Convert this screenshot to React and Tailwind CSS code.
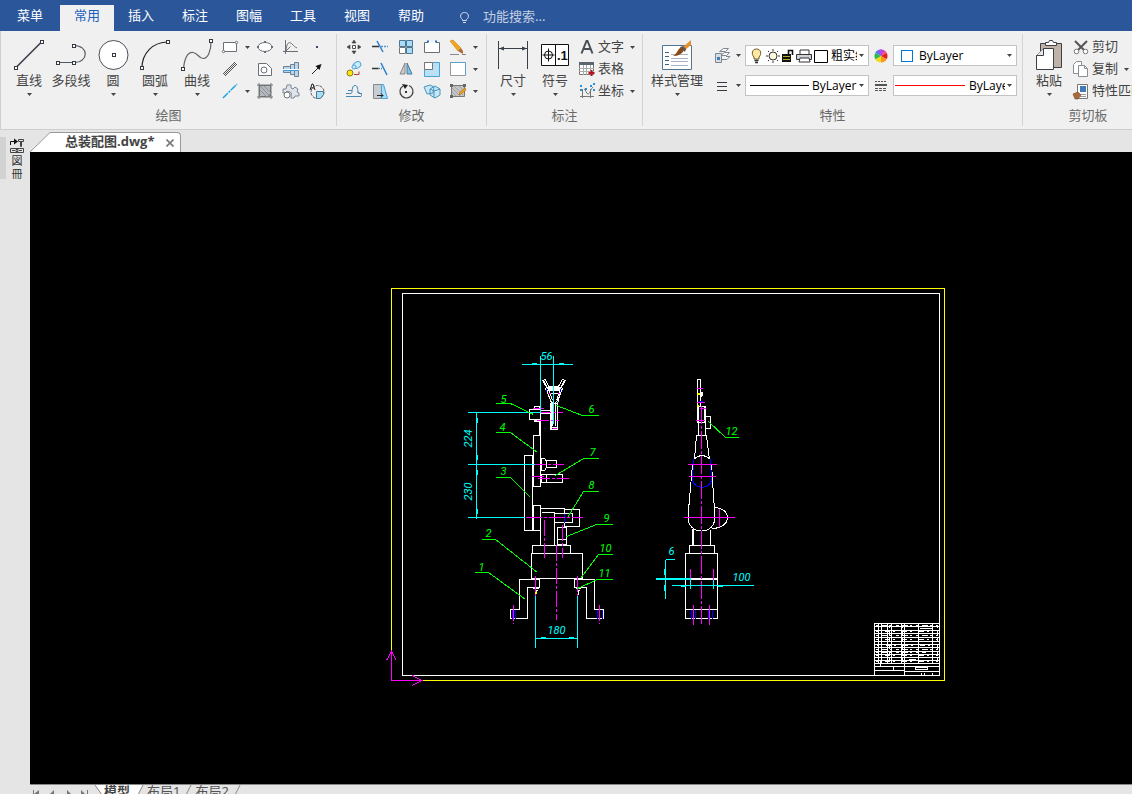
import { useState } from 'react';

const MENU = ['常用', '插入', '标注', '图幅', '工具', '视图', '帮助'];

const Svg = ({ w = 20, h = 20, children, ...rest }) => (
  <svg width={w} height={h} viewBox={`0 0 ${w} ${h}`} fill="none" stroke="#6b7078" className="block shrink-0" aria-hidden="true" {...rest}>
    {children}
  </svg>
);

const Arrow = () => (
  <svg width="5" height="3" viewBox="0 0 5 3" className="block shrink-0" aria-hidden="true">
    <path d="M0 0h5L2.5 3z" fill="#444" />
  </svg>
);

const Node = ({ x, y }) => <rect x={x - 1.5} y={y - 1.5} width="3" height="3" fill="#fff" stroke="#333a42" />;

/* ---- large icons ---- */

const LineIcon = () => (
  <Svg w={32} h={32}>
    <path d="M3 28.5L29 2.5" stroke="#3d3d4a" strokeWidth="1.6" />
    <Node x={3} y={29} />
    <Node x={29} y={3} />
  </Svg>
);

const PolylineIcon = () => (
  <Svg w={32} h={32}>
    <path d="M3 23.5H19C34 23.5 34 6.500 19 6.500" stroke="#555a62" strokeWidth="1.2" />
    <Node x={3} y={24} />
    <Node x={19} y={24} />
    <Node x={19} y={7} />
  </Svg>
);

const CircleIcon = () => (
  <Svg w={32} h={32}>
    <circle cx="16.500" cy="16" r="14.500" fill="#fff" stroke="#4a5058" />
    <Node x={17} y={16} />
  </Svg>
);

const ArcIcon = () => (
  <Svg w={32} h={32}>
    <path d="M3 29C3 14 14 3 29 3" stroke="#222" strokeWidth="1.2" />
    <Node x={3} y={29} />
    <Node x={29} y={3} />
  </Svg>
);

const CurveIcon = () => (
  <Svg w={32} h={32}>
    <path d="M2.500 29C4 17 7 13 12 13.500S18 20 22.500 19.500S30 12 30 3" stroke="#666" strokeWidth="1.2" />
    <Node x={2} y={30} />
    <Node x={30} y={2} />
  </Svg>
);

const DimensionIcon = () => (
  <Svg w={32} h={32} stroke="#3a3f47">
    <path d="M1.500 2v28M30.500 2v28M2 9.500h28" />
    <path d="M2 9.500l5-2v4zM30 9.500l-5-2v4z" fill="#3a3f47" stroke="none" />
  </Svg>
);

const SymbolIcon = () => (
  <Svg w={32} h={32} stroke="#111">
    <path d="M2.500 5.500h27v21h-27zM16.500 5.500v21" fill="#fff" />
    <circle cx="9.500" cy="16" r="4" />
    <path d="M3.500 16h12M9.500 9.500v13" />
    <text x="18" y="21" fontSize="13" fontWeight="700" fontFamily="Liberation Sans, sans-serif" fill="#111" stroke="none">.1</text>
  </Svg>
);

const StyleIcon = () => (
  <Svg w={32} h={32}>
    <path d="M1.500 6.500h29v24h-29z" fill="#fff" stroke="#4f7590" />
    <path d="M4 13.500h4M4 17.500h4M4 21.500h4M4 25.500h4" stroke="#3d5f80" />
    <path d="M10 15.500h17M10 19.500h17M10 22.500h17M10 26.500h17" stroke="#a9b4c4" />
    <path d="M22 8l8-7v5l-6 5z" fill="#e8902c" stroke="none" />
    <path d="M19 8l3-1 3 3-1 3z" fill="#555" stroke="none" />
    <path d="M20 8l3 3c-2 4-6 6-11 6 4-2 4-6 8-9z" fill="#8a4a16" stroke="none" />
  </Svg>
);

const PasteIcon = () => (
  <Svg w={32} h={32} stroke="#3c4048">
    <path d="M7.500 4.500h21v24h-21z" fill="#c0b2a6" />
    <path d="M12.500 6.500v-3h3l1-2h3l1 2h3v3z" fill="#fff" />
    <path d="M10.500 9.500h10v21h-17v-14z" fill="#fff" />
    <path d="M10.500 9.500v7h-7" fill="#e8e8e8" />
  </Svg>
);

/* ---- small icons ---- */

const drawIcons = [
  { label: '矩形', arrow: true, icon: <Svg><path d="M3.500 5.500h13v9h-13z" fill="#fff" /><circle cx="3.500" cy="14.500" r="1.200" fill="#fff" /><circle cx="16.500" cy="5.500" r="1.200" fill="#fff" /></Svg> },
  { label: '椭圆', icon: <Svg><ellipse cx="10" cy="10" rx="7" ry="4.500" fill="#fff" /><path d="M9 5h2M9 15h2M3 9v2M17 9v2" strokeWidth="2" /></Svg> },
  { label: '公式曲线', icon: <Svg><path d="M4.500 3v14M2 14.500h15M5 13C6 4 9 5 11 7S14 10 16 11M4.500 14.500l5-5" /></Svg> },
  { label: '点', icon: <Svg><path d="M9 9h2v2h-2z" fill="#446" stroke="none" /></Svg> },
  { label: '平行线', icon: <Svg><path d="M3 15L15 3M5 17L17 5M4 16L16 4" stroke="#555" /></Svg> },
  { label: '孔', icon: <Svg><path d="M3.500 4.500h8l5 5v7h-13z" fill="#fff" /><circle cx="9" cy="11" r="3" fill="#fff" /></Svg> },
  { label: '轴', icon: <Svg stroke="#6b8296"><path d="M2.500 7.500h7v6h-7zM9.500 5.500h4v10h-4zM13.500 3.500h4v14h-4z" fill="#bcd6ea" /><path d="M2 10.500h16" stroke="#fff" /><path d="M2 11.500h16" stroke="#3c9be0" /></Svg> },
  { label: '箭头', icon: <Svg><path d="M5 15l6-6" stroke="#222" /><path d="M14.500 5l-2 6-4-4z" fill="#111" stroke="none" /></Svg> },
  { label: '中心线', arrow: true, icon: <Svg><path d="M3 17L17 3" stroke="#2aa7e0" strokeWidth="1.600" strokeDasharray="7 1 2 1" /></Svg> },
  { label: '剖面线', icon: <Svg><path d="M4.500 4.500h11v11h-11z" fill="#b5b9bd" /><path d="M4 2v16M16 2v16M2 4h16M2 16h16" stroke="#777" /><path d="M5 9l7 7M5 5l11 11M9 5l7 7M17 11l-6 6" stroke="#8d9297" /></Svg> },
  { label: '齿轮', icon: <Svg><path d="M6 4h4v3l2 1 2-2 3 2-1 3 2 1v3h-4l-1 2h-3v-2c2-5-4-6-6-3H2V8h3z" fill="#dfe4ea" stroke="#7c8794" /><circle cx="6" cy="14" r="3" fill="#fff" /></Svg> },
  { label: '局部放大', icon: <Svg><circle cx="10.500" cy="11" r="6.500" stroke="#556" strokeDasharray="3 1" /><path d="M9.500 10.500h7v3l-3 4h-4z" fill="#a9dcf6" stroke="#4a7894" /><path d="M3 9l2-6h1l2 6M4 7h3" stroke="#222" /></Svg> },
];

const editIcons = [
  { label: '平移', icon: <Svg><path d="M8.500 8.500h3v3h-3z" fill="#fff" stroke="#555" /><path d="M10 3l2 3H8zM10 17l2-3H8zM3 10l3-2v4zM17 10l-3-2v4z" fill="#444" stroke="#444" strokeWidth=".6" /></Svg> },
  { label: '裁剪', icon: <Svg><path d="M2 9.500h7" stroke="#333" strokeWidth="1.500" /><path d="M11 9.500h7" stroke="#5a94c8" strokeWidth="1.500" strokeDasharray="2 1" /><path d="M7 4l6 11" stroke="#2a7fd0" strokeWidth="1.500" /></Svg> },
  { label: '阵列', icon: <Svg stroke="#4a7894"><path d="M3.500 3.500h6v6h-6zM10.500 3.500h6v6h-6zM10.500 10.500h6v6h-6z" fill="#a9dcf6" /><path d="M3.500 10.500h6v6h-6z" fill="#fff" stroke="#777" /></Svg> },
  { label: '打断', icon: <Svg><path d="M6 5.500H2.500v10h15v-10H14" fill="#fff" /><path d="M5 4.500h2M13 4.500h2" stroke="#1b6fd0" strokeWidth="2" /></Svg> },
  { label: '删除', arrow: true, icon: <Svg><path d="M2 4l3-1 8 8-3 3z" fill="#f2a51d" stroke="#c78316" strokeWidth=".6" /><path d="M10 14l3-3 2 3v3z" fill="#b06a3a" stroke="none" /><path d="M2 17.500h9M14 17.500h4" stroke="#888" /></Svg> },
  { label: '复制', icon: <Svg><ellipse cx="13" cy="6" rx="4" ry="3" fill="#cfeafa" stroke="#4aa3d8" transform="rotate(-30 13 6)" /><circle cx="10" cy="8" r="2" fill="#cfeafa" stroke="#4aa3d8" /><circle cx="6" cy="14" r="3" fill="#ffe600" stroke="#8a7a20" /><path d="M10 15.500h5v-3" stroke="#b33" /></Svg> },
  { label: '延伸', icon: <Svg><path d="M2 9.500h6" stroke="#333" strokeWidth="1.500" /><path d="M8 9.500h4" stroke="#48a" strokeWidth="1.500" strokeDasharray="2 1" /><path d="M11 4l6 12" stroke="#2a7fd0" strokeWidth="1.500" /></Svg> },
  { label: '镜像', icon: <Svg><path d="M9 4v11H4z" fill="#ccc" stroke="#888" /><path d="M11 4v11h5z" fill="#7cc4ee" stroke="#4a7894" /></Svg> },
  { label: '缩放', icon: <Svg><path d="M2.500 3.500h15v14h-15z" fill="#b9e0f5" stroke="#4aa3d8" /><path d="M2.500 3.500h8v7h-8z" fill="#fff" stroke="#777" /></Svg> },
  { label: '拉伸', arrow: true, icon: <Svg><path d="M2.500 3.500h15v13h-15z" fill="#fff" stroke="#999" /><path d="M2.500 3.500h15v13" stroke="#4aa3d8" strokeDasharray="3 1" /></Svg> },
  { label: '等距线', icon: <Svg><path d="M2 12.500h5c2 0 0-8 4-8s2 8 4 8h3M2 15.500h15c2-2-2-5-4-4M4 9.500h4" stroke="#4b86b0" /></Svg> },
  { label: '倒角', icon: <Svg><path d="M3.500 3.500h8v14h-8z" fill="#c9cdd2" stroke="#888" /><path d="M11.500 3.500h2l4 14h-6z" fill="#a9dcf6" stroke="#4aa3d8" /><path d="M7 14.500h6m-2-2l2 2-2 2" stroke="#222" /></Svg> },
  { label: '旋转', icon: <Svg stroke="#444"><path d="M7 5a6.500 6.500 0 1 0 6-.5" strokeWidth="1.200" /><path d="M6 3l6 1-3 4z" fill="#222" stroke="none" /><path d="M9 10h2v2h-2z" fill="#333" stroke="none" /></Svg> },
  { label: '块', icon: <Svg stroke="#4a94bc"><path d="M2 6l6-2 4 2-1 6-6 1zM8 8l5-3 5 3v6l-5 3-5-3z" fill="#c6e7f7" /><path d="M8 8l4 2 6-2M12 10v7" /></Svg> },
  { label: '编辑剖面', arrow: true, icon: <Svg stroke="#777"><path d="M3.500 4.500h13v11h-13z" fill="#c4c4c4" /><path d="M4 7l8 8M6 5l9 9M4 11l4 4M11 5l5 5" stroke="#a4a4a4" /><path d="M2 3h3v3H2zM15 3h3v3h-3zM2 14h3v3H2z" fill="#666" stroke="none" /><path d="M11 14l1-3 5-4 1 2-5 4z" fill="#f2a51d" stroke="#a66a10" strokeWidth=".6" /></Svg> },
];

const TextIcon = () => (
  <Svg stroke="#4a4e55"><path d="M4.500 16.500L9.500 4h1l5 12.500M6.500 12h7" strokeWidth="2" /></Svg>
);

const TableIcon = () => (
  <Svg>
    <path d="M2.500 3.500h14v12h-14z" fill="#fff" stroke="#777" />
    <path d="M2 3h15v3H2z" fill="#5c6470" stroke="none" />
    <path d="M2 9.500h15M2 12.500h15M6.500 6v10M9.500 6v10M13.500 6v10" stroke="#aaa" />
    <path d="M14.500 11v6M11.500 14h6" stroke="#b3121d" strokeWidth="2" />
  </Svg>
);

const CoordIcon = () => (
  <Svg>
    <path d="M5.500 8v9M3 15.500h14M7 8c2 0 2 5 4 5s2-4 5-7M13.500 8v9" stroke="#777" />
    <path d="M3 5h2M3 9h2M8 8h2M13 5h2M16 3h2M16 9h2" stroke="#2a8fd8" strokeWidth="2" />
  </Svg>
);

const ScissorsIcon = () => (
  <Svg>
    <path d="M4 4l9 9M16 4l-9 9" stroke="#555" strokeWidth="2" />
    <circle cx="5.500" cy="14.500" r="2.300" fill="#fff" stroke="#777" />
    <circle cx="14.500" cy="14.500" r="2.300" fill="#fff" stroke="#777" />
  </Svg>
);

const CopyIcon = () => (
  <Svg>
    <path d="M2.500 5.500l3-3h5v12h-8z" fill="#fff" stroke="#8a8f96" />
    <path d="M7.500 6.500h6l3 3v8h-9z" fill="#fff" stroke="#8a8f96" />
    <path d="M13.500 6.500v3h3" stroke="#8a8f96" />
  </Svg>
);

const MatchIcon = () => (
  <Svg>
    <path d="M6.500 3.500h10v14h-10z" fill="#fff" stroke="#777" />
    <path d="M9 5h6v6H9z" fill="#3f7cb8" stroke="none" />
    <path d="M9 13.500h6M9 15.500h6" stroke="#999" />
    <path d="M2 13l5-2 3 3-3 4H4z" fill="#a86a3a" stroke="#7a4720" strokeWidth=".6" />
  </Svg>
);

const LayerIcon = () => (
  <Svg stroke="#808890">
    <path d="M7.500 5.500l4-3h5l-3 3zM8.500 9.500l4-3h5l-3 3zM10 13.500h5l3-3h-4" fill="#f4f6f8" />
    <path d="M3.500 7.500h6v9h-6z" fill="#d4dce4" />
    <path d="M5 11h3v3H5z" fill="#3f7cb8" stroke="none" />
  </Svg>
);

const WeightIcon = () => (
  <Svg stroke="#333a42"><path d="M5 6.500h10M5 10.500h10M5 14.500h10" /></Svg>
);

const ColorWheel = () => (
  <Svg w={16} h={16} stroke="none">
    <path d="M8 8V1.500A6.500 6.500 0 0 1 13.600 4.750z" fill="#f0508c" />
    <path d="M8 8l5.600-3.250a6.500 6.500 0 0 1 0 6.500z" fill="#e8201c" />
    <path d="M8 8l5.600 3.250A6.500 6.500 0 0 1 8 14.500z" fill="#f59a1c" />
    <path d="M8 8v6.500a6.500 6.500 0 0 1-5.600-3.250z" fill="#f2dc1a" />
    <path d="M8 8l-5.600 3.250a6.500 6.500 0 0 1 0-6.500z" fill="#30b848" />
    <path d="M8 8L2.400 4.750A6.500 6.500 0 0 1 8 1.500z" fill="#4f7df2" />
    <path d="M8 8L5 2.200a6.500 6.500 0 0 1 6 0z" fill="#b04af0" />
  </Svg>
);

const LineTypeIcon = () => (
  <Svg w={16} h={16} stroke="#555">
    <path d="M2 3.500h12" strokeDasharray="2 1" />
    <path d="M2 7h12" strokeWidth="2" />
    <path d="M2 10.500h12M2 12.500h12" strokeDasharray="3 1" />
  </Svg>
);

const LayerState = () => (
  <svg width="81" height="18" viewBox="0 0 81 18" fill="none" className="block shrink-0" aria-hidden="true">
    <path d="M4 10C1 7 2 2 6.500 2S12 7 9 10v2H4z" fill="#ffe9a0" stroke="#6b5a2a" />
    <path d="M4.500 13.500h4M5 15.500h3" stroke="#333" strokeWidth="1.500" />
    <circle cx="23" cy="9" r="4" fill="#fff8e0" stroke="#333" />
    <path d="M23 2v2M23 14v2M16 9h2M28 9h2M18 4l1 1M28 4l-1 1M18 14l1-1M28 14l-1-1" stroke="#333" />
    <path d="M32 7h9v8h-9z" fill="#111" />
    <path d="M33 9.500h7M33 12.500h7" stroke="#b8b020" />
    <path d="M38.500 7V3.500h4V8" stroke="#111" strokeWidth="1.600" />
    <path d="M50 7V3h9v4" fill="#fff" stroke="#333" />
    <path d="M46.500 7.500h15v5h-15z" fill="#cdd2d8" stroke="#333" />
    <path d="M50 11h9l1 4H49z" fill="#fff" stroke="#333" />
    <path d="M64.500 3.500h13v12h-13z" fill="#fff" stroke="#000" />
  </svg>
);

/* ---- ribbon parts ---- */

const Group = ({ title, children }) => (
  <section className="my-[3px] flex shrink-0 flex-col border-r border-[#d4d4d4] px-[5px] pt-[2px]">
    <div className="flex h-[70px]">{children}</div>
    <h2 className="text-center text-[13px] leading-[18px] text-[#6a6a6a]">{title}</h2>
  </section>
);

const BigButton = ({ icon, label, arrow = true }) => (
  <button className="flex min-w-[42px] flex-col items-center px-[1px] pt-[3px] text-[13px] leading-[18px] whitespace-nowrap">
    {icon}
    <span>{label}</span>
    {arrow && <span className="pt-1"><Arrow /></span>}
  </button>
);

const SmallButton = ({ icon, label, arrow }) => (
  <button aria-label={label} className="flex h-[22px] items-center">
    <span className="flex w-6 justify-center">{icon}</span>
    {arrow && <span className="pl-[3px]"><Arrow /></span>}
  </button>
);

const RowButton = ({ icon, label, arrow }) => (
  <button className="flex h-[22px] items-center text-[13px] leading-[18px] whitespace-nowrap">
    <span className="flex w-[22px] justify-center">{icon}</span>
    <span className="pb-[2px]">{label}</span>
    {arrow && <span className="pl-[6px]"><Arrow /></span>}
  </button>
);

const Combo = ({ label, options, children }) => (
  <label className="flex h-[21px] w-[124px] items-center border border-[#c3c3c3] bg-white px-1 font-['Open_Sans','Noto_Sans_CJK_SC',sans-serif] text-xs text-black">
    {children}
    <select aria-label={label} className="mr-[2px] min-w-0 flex-1 appearance-none overflow-hidden bg-transparent outline-none">
      {options.map(o => <option key={o}>{o}</option>)}
    </select>
    <Arrow />
  </label>
);

const Ribbon = () => (
  <div className="flex h-[99px] shrink-0 overflow-hidden border-b border-l border-[#cfcfcf] bg-[#f0f0f0] text-[#444]">
    <Group title="绘图">
      <div className="flex pl-[2px]">
        <BigButton icon={<LineIcon />} label="直线" />
        <BigButton icon={<PolylineIcon />} label="多段线" arrow={false} />
        <BigButton icon={<CircleIcon />} label="圆" />
        <BigButton icon={<ArcIcon />} label="圆弧" />
        <BigButton icon={<CurveIcon />} label="曲线" />
      </div>
      <div className="grid grid-cols-[35px_26px_26px_26px] content-start">
        {drawIcons.map(i => <SmallButton key={i.label} {...i} />)}
      </div>
    </Group>
    <Group title="修改">
      <div className="grid grid-cols-[26px_26px_26px_26px_35px] content-start">
        {editIcons.map(i => <SmallButton key={i.label} {...i} />)}
      </div>
    </Group>
    <Group title="标注">
      <BigButton icon={<DimensionIcon />} label="尺寸" />
      <BigButton icon={<SymbolIcon />} label="符号" />
      <div className="pr-[2px]">
        <RowButton icon={<TextIcon />} label="文字" arrow />
        <RowButton icon={<TableIcon />} label="表格" />
        <RowButton icon={<CoordIcon />} label="坐标" arrow />
      </div>
    </Group>
    <Group title="特性">
      <div className="flex w-[58px] justify-center">
        <BigButton icon={<StyleIcon />} label="样式管理" />
      </div>
      <div className="flex flex-col gap-[9px] pt-[9px] pl-[6px]">
        <div className="flex h-[21px] items-center">
          <button aria-label="图层" className="flex w-[33px] items-center justify-between pr-1"><LayerIcon /><Arrow /></button>
          <Combo label="当前图层" options={['粗实线层', '细实线层', '中心线层']}><LayerState /></Combo>
          <button aria-label="颜色" className="flex w-6 justify-center"><ColorWheel /></button>
          <Combo label="当前颜色" options={['ByLayer', 'ByBlock']}>
            <span className="mx-[3px] mr-[6px] h-3 w-3 shrink-0 border border-[#0078d7]" />
          </Combo>
        </div>
        <div className="flex h-[21px] items-center">
          <button aria-label="线宽" className="flex w-[33px] items-center justify-between pr-1"><WeightIcon /><Arrow /></button>
          <Combo label="当前线宽" options={['ByLayer', 'ByBlock']}>
            <span className="mr-[3px] h-px w-[59px] shrink-0 bg-black" />
          </Combo>
          <button aria-label="线型" className="flex w-6 justify-center"><LineTypeIcon /></button>
          <Combo label="当前线型" options={['ByLayer', 'ByBlock']}>
            <span className="mr-1 -ml-[3px] h-px w-[70px] shrink-0 bg-[#ff0000]" />
          </Combo>
        </div>
      </div>
    </Group>
    <Group title="剪切板">
      <BigButton icon={<PasteIcon />} label="粘贴" />
      <div className="pr-1">
        <RowButton icon={<ScissorsIcon />} label="剪切" />
        <RowButton icon={<CopyIcon />} label="复制" arrow />
        <RowButton icon={<MatchIcon />} label="特性匹配" />
      </div>
    </Group>
  </div>
);

/* ---- drawing ---- */

const LEADERS = [
  ['1', 481, 570, '474,572 488,572 525,599'],
  ['2', 488, 536, '481,539 495,539 537,572'],
  ['3', 503, 474, '495,477 510,477 530,497'],
  ['4', 502, 430, '495,432 510,432 537,452'],
  ['5', 503, 402, '495,403 510,403 533,414'],
  ['6', 591, 412, '598,415 582,415 556,405'],
  ['7', 592, 455, '598,458 583,458 555,475'],
  ['8', 591, 488, '598,491 583,491 567,517'],
  ['9', 606, 521, '612,524 596,524 566,536'],
  ['10', 605, 551, '612,554 598,554 580,578'],
  ['11', 604, 576, '612,579 597,579 577,588'],
  ['12', 731, 434, '738,437 725,437 708,421'],
];

const TABLE_ROWS = [626, 630, 633, 637, 641, 644, 647, 651, 654, 657, 660, 663];
const TABLE_COLS = [878, 881, 887, 891, 901, 904, 918, 932];

const Drawing = () => (
  <svg width="1102" height="632" viewBox="30 152 1102 632" fill="none" shapeRendering="crispEdges" className="block shrink-0" role="img" aria-label="总装配图">
    <g transform="translate(.5 .5)">
      <path d="M391 288H944V680H391z" stroke="#ff0" />
      <path d="M402 293H939V675H402z" stroke="#fff" />

      <g stroke="#fff">
        {/* fork and shaft */}
        <path d="M542 380l5 8h13l5-8M543 380l5 9h11l5-9M545 379l3 7h10l4-7M542 380l3-1M562 379l3 1M546 389l5 14M545 388l6 14M561 389l-4 14M562 388l-6 14M546 390h15M548 393h11M549 391l3 9M559 391l-3 9M547 387h13" />
        <path d="M550 403h7v26h-7zM551 403v26M552 401v24M555 401v24M551 427h6" />
        <path d="M529 409h11v10h-11zM534 406h5v2h-5zM534 420h5v1h-5zM540 406v29M539 420v14M540 410h10M540 413h10" />
        {/* column */}
        <path d="M533 435h7v51h-7zM524 455h8v75h-8zM541 458h3l2 3v6l-2 3h-3zM546 460h10v7h-10zM541 474h21v8h-21zM546 474v8" />
        <path d="M533 505h7v25h-7zM540 508h24v4M540 508v37M541 512h13v33M554 513h18v9h-18M564 509h15v17h-15zM557 527h9v17h-9zM557 539h9" />
        <path d="M532 545h38v8h-38zM531 553h51v25h-51z" />
        <path d="M519 579H539V587H527V618H510V609H519zM574 579H594V609H603V618H586V587H574z" />
        <path d="M532 588h6M534 590h3M535 590v4M575 588h5M576 590h3M578 590v4" />
        {/* side view */}
        <path d="M697 379h3v27h-3zM697 406h8v16h-8zM698 406v16M704 406v16M701 391v5M702 391v4M705 416h5v12h-5zM698 422v13M705 422v13" />
        <path d="M696 435h10l3 24M696 435l-2 24M694 459C697 454 706 454 709 459M692 464L688 510V520C690 534 712 534 714 520V510L711 464" />
        <path d="M713 507C732 507 732 528 711 528M693 528v17M692 528v17M710 529v16M689 545h25v8h-25zM685 553h32v65h-32zM685 609h32M690 578h27M690 579h27" />
      </g>

      <g stroke="#00f">
        <path d="M564 513v9M512 609v9M515 609v9M597 609v9M602 609v9M546 388v3M560 388v3" />
        <path d="M693 459L692 480C695 489 708 489 711 480L710 459M698 401h4M691 609v9M695 609v9M708 609v9M712 609v9" />
      </g>
      <path d="M535 590v3M696 393h3M696 405h2" stroke="#ff0" strokeWidth="2" />

      <g stroke="#f0f">
        <path d="M532 408h11M538 412h24M536 420h22M533 464h30M531 476h14M537 478h32M548 393h2M557 393h2M553 400v3M552 428h4" strokeDasharray="12 2 3 2" />
        <path d="M525 517h57M544 519v38M562 524v33M556 544v75M513 604v19M599 604v19M535 575v20M577 575v20" strokeDasharray="16 2 3 2" />
        <path d="M687 464h29M688 476h27M683 517h51M719 508v18M690 568v11M713 568v11M693 604v20M709 604v20M696 388h6M696 402h8M695 420h9M699 408h6" />
        <path d="M701 405v219" strokeDasharray="18 2 3 2" />
        <path d="M391 680V651l-5 9M391 651l5 9M391 680H421l-9-5M421 680l-9 5" />
      </g>

      <g stroke="#0ff">
        <path d="M521 364h51M540 355v57M553 355v68M531 363h5M558 363h5" />
        <path d="M476 412v106M467 412h73M467 464h67M467 517h57M477 417v5M477 454v5M477 469v5M477 508v5" />
        <path d="M535 595v52M577 595v52M535 638h42M540 637h5M568 637h5" />
        <path d="M665 559h9M665 559v39M664 568v6M664 584v6M655 578h35M655 579h35M690 579v9M713 579v9M671 585h82M680 586h5M717 586h5" />
      </g>

      <g stroke="#0f0">
        {LEADERS.map(([n, , , points]) => <polyline key={n} points={points} />)}
      </g>

      <g fontFamily="Roboto, sans-serif" fontStyle="italic" fontSize="11" textAnchor="middle">
        <g fill="#0f0">
          {LEADERS.map(([n, x, y]) => <text key={n} x={x} y={y}>{n}</text>)}
        </g>
        <g fill="#0ff">
          <text x="546" y="359">56</text>
          <text x="556" y="633">180</text>
          <text x="671" y="554">6</text>
          <text x="741" y="580">100</text>
          <text transform="translate(471 438) rotate(-90)">224</text>
          <text transform="translate(471 491) rotate(-90)">230</text>
        </g>
      </g>

      {/* title block */}
      <g stroke="#fff">
        <path d="M874 623H939V675H874zM904 623V675M874 666h30M874 670h30M893 666v4M904 671h35M904 666h35" />
        {TABLE_ROWS.map(y => <path key={y} d={`M874 ${y}h65`} />)}
        {TABLE_COLS.map(x => <path key={x} d={`M${x} 623v40`} />)}
        <path d="M875 625h62M875 635h62M875 649h62M875 652h50" strokeDasharray="3 3 6 2 2 4" />
        <path d="M875 639h62M875 655h62M875 661h62M876 645h60M875 631h60" strokeDasharray="2 7 5 3" />
        <path d="M889 624v38M902 624v38M937 624v38" strokeDasharray="3 3 5 2" />
        <path d="M908 659h7M915 667h12v2h-12zM921 672v3M924 672v3M932 672v3M919 628h12M880 666v-6" />
      </g>
    </g>
  </svg>
);

const App = () => {
  const [active, setActive] = useState('常用');

  return (
    <div className="flex h-screen flex-col overflow-hidden bg-[#e5e5e5] font-['Noto_Sans','Noto_Sans_CJK_SC',sans-serif] text-[13px]">
      <header className="flex h-[31px] shrink-0 items-end bg-[#2b579a] text-white">
        <button className="h-[26px] w-[60px] pb-1">菜单</button>
        <nav className="flex">
          {MENU.map(item => (
            <button
              key={item}
              onClick={() => setActive(item)}
              className={`h-[26px] w-[54px] pb-1 ${item === active ? 'bg-[#f0f0f0] text-[#1a5fc0]' : ''}`}
            >
              {item}
            </button>
          ))}
        </nav>
        <label className="ml-5 flex h-[26px] items-center gap-3 pb-[2px]">
          <svg width="13" height="14" viewBox="0 0 13 14" fill="none" stroke="#d5deec" aria-hidden="true">
            <path d="M4.500 9.500C1 7 2.500 2.500 6.500 2.500S12 7 8.500 9.500v1h-4zM5 12.500h3" />
          </svg>
          <input aria-label="功能搜索" placeholder="功能搜索..." className="w-40 bg-transparent outline-none placeholder:text-[#c3cfe2]" />
        </label>
      </header>

      <Ribbon />

      <div className="flex min-h-0 flex-1">
        <aside className="flex w-[30px] shrink-0 items-start pt-[7px]">
          <div className="h-[42px] w-[6px] bg-[#d2d2d2]" />
          <button className="flex w-[22px] flex-col items-center text-[11px] leading-[13px] text-[#333]">
            <svg width="16" height="17" viewBox="0 0 16 17" fill="none" stroke="#444" aria-hidden="true">
              <path d="M1.500 8V4.500H6" stroke="#111" />
              <path d="M5 1.500l4 3-4 3z" fill="#111" stroke="none" />
              <path d="M9.500 2.500h5v2h-5zM11.500 4.500h1v5h-1zM1.500 11.500h13v4h-13z" />
              <path d="M3 13.500h3M10 13.500h3M7 12.500h2v2H7z" />
            </svg>
            <span>図</span>
            <span>冊</span>
          </button>
        </aside>

        <main className="flex min-w-0 flex-1 flex-col">
          <div className="flex h-[22px] shrink-0 items-end">
            <svg width="21" height="20" viewBox="0 0 21 20" className="block" aria-hidden="true">
              <path d="M0 20L20 .5H21V20z" fill="#fff" />
              <path d="M0 20L20 .5H21" fill="none" stroke="#999" />
            </svg>
            <div className="flex h-5 items-center rounded-tr border-t border-r border-[#999] bg-white pr-[5px] pl-[14px] font-['Open_Sans','Noto_Sans_CJK_SC',sans-serif] text-[#444]">
              <span className="w-[100px] pb-[2px] font-bold">总装配图.dwg*</span>
              <button aria-label="关闭" className="flex h-[10px] w-[10px] items-center justify-center">
                <svg width="8" height="8" viewBox="0 0 8 8" stroke="#777" strokeWidth="1.600"><path d="M.5.5l7 7M7.500.5l-7 7" /></svg>
              </button>
            </div>
          </div>

          <div className="min-h-0 flex-1 overflow-hidden bg-black">
            <Drawing />
          </div>

          <footer className="flex h-[10px] shrink-0 overflow-hidden border-t border-[#888] text-[13px] leading-3 text-[#555]">
            <svg width="65" height="10" viewBox="0 0 65 10" fill="#777" className="block shrink-0" aria-hidden="true">
              <path d="M3 5h1v5H3zM9 5v5L4 9zM24 5v5L20 9zM37 5v5l4-1zM51 5v5l4-1zM57 5h1v5h-1z" />
            </svg>
            <svg width="9" height="10" viewBox="0 0 9 10" className="block shrink-0" aria-hidden="true">
              <path d="M0 0H9V10H7z" fill="#fff" />
              <path d="M0 0l7 10" stroke="#888" />
            </svg>
            <button className="h-3 bg-white font-bold text-[#444]">模型</button>
            <svg width="17" height="10" viewBox="0 0 17 10" className="block shrink-0" aria-hidden="true">
              <path d="M0 0H13L8 10H0z" fill="#fff" />
              <path d="M13 0L8 10" stroke="#888" />
            </svg>
            <button className="h-3">布局1</button>
            <svg width="15" height="10" viewBox="0 0 15 10" className="block shrink-0" aria-hidden="true"><path d="M11 0L6 10" stroke="#888" /></svg>
            <button className="h-3">布局2</button>
            <svg width="15" height="10" viewBox="0 0 15 10" className="block shrink-0" aria-hidden="true"><path d="M11 0L6 10" stroke="#888" /></svg>
          </footer>
        </main>
      </div>
    </div>
  );
};

export default App;
